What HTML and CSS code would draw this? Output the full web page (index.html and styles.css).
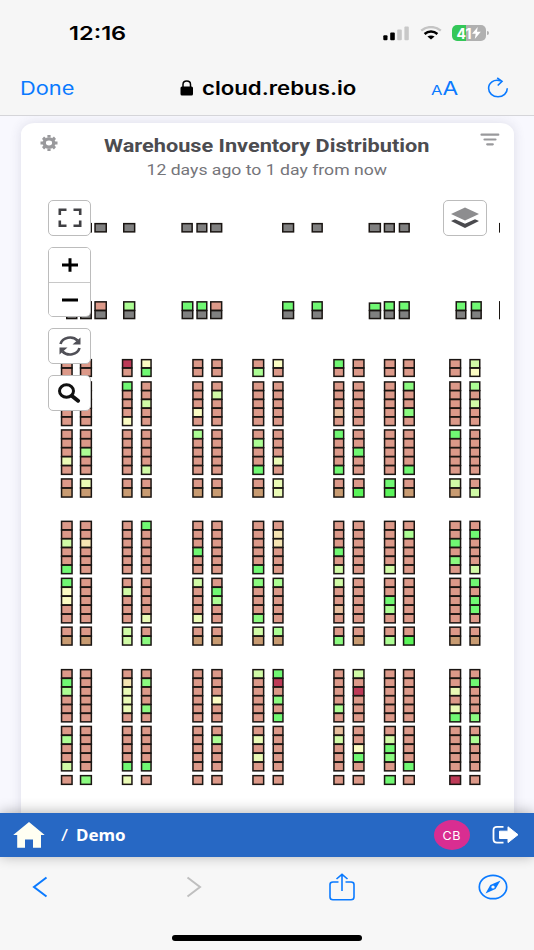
FILE: index.html
```
<!DOCTYPE html>
<html lang="en">
<head>
    <meta charset="UTF-8">
    <meta name="viewport" content="width=device-width, initial-scale=1.0">
    <title>Warehouse Inventory Distribution</title>
    <link rel="stylesheet" href="styles.css">
</head>
<body>
    <header class="browser-top">
        <div class="status-bar">
            <span class="wide time">12:16</span>
            <div class="status-icons">
                <svg width="27" height="15" viewBox="0 0 27 15">
                    <rect x="0.3" y="9.3" width="4.2" height="5" rx="1"/>
                    <rect x="7.2" y="6.6" width="4.6" height="7.7" rx="1"/>
                    <rect x="14.2" y="3.4" width="4.6" height="10.9" rx="1" fill="#c8c8c8"/>
                    <rect x="21.4" y="0.4" width="4.4" height="13.9" rx="1" fill="#c8c8c8"/>
                </svg>
                <svg class="wifi" width="22" height="14" viewBox="0 0 22 14" fill="none">
                    <path d="M1.2 4.7C6.8-.2 15.2-.2 20.8 4.7" stroke="#c4c4c4" stroke-width="2.3"/>
                    <path d="M4.6 8C8.3 4.7 13.7 4.7 17.4 8" stroke="#000" stroke-width="2.5"/>
                    <path d="M11 13.5L7.4 10.6C9.5 9 12.5 9 14.6 10.6Z" fill="#000"/>
                </svg>
                <div class="battery">
                    <span class="battery-text">41</span>
                    <svg width="9" height="12" viewBox="0 0 9 12"><path d="M5.7 0L0 6.8H3.7L2.8 12L8.8 4.8H5Z" fill="#fff"/></svg>
                </div>
            </div>
        </div>
        <div class="address-bar">
            <span class="wide done">Done</span>
            <div class="address">
                <svg width="14" height="16" viewBox="0 0 14 16">
                    <rect x="0.5" y="6.5" width="12.5" height="9" rx="1.5"/>
                    <path d="M3 7.5V4.500C3 -.1 10.500-.1 10.500 4.500V7.500" fill="none" stroke="#000" stroke-width="1.500"/>
                </svg>
                <span class="wide host">cloud.rebus.io</span>
            </div>
            <div class="address-actions">
                <span class="wide text-size"><small>A</small>A</span>
                <svg width="22" height="22" viewBox="0 0 22 22" fill="none" stroke="#0a7aff" stroke-width="1.6">
                    <path d="M13.5 3.8C6.5 1.8 1.6 6 1.6 11.2C1.6 16.1 5.8 19.8 11 19.8C16.2 19.8 20.3 16 20.3 11.3"/>
                    <path d="M10.2 1L15 4.3L10.7 8.5"/>
                </svg>
            </div>
        </div>
    </header>

    <main class="content">
        <section class="card">
            <div class="card-header">
                <svg class="gear" width="18" height="16" viewBox="0 0 18 16">
                    <ellipse cx="9" cy="8" rx="4.8" ry="4.1" fill="none" stroke="#99999c" stroke-width="3.4"/>
                    <path d="M9 0V2.5M9 13.5V16M.5 8H3M15 8H17.5M3 2.8L5 4.5M15 2.8L13 4.5M3 13.2L5 11.5M15 13.2L13 11.5" stroke="#99999c" stroke-width="3.2"/>
                </svg>
                <div class="titles">
                    <h1 class="wide">Warehouse Inventory Distribution</h1>
                    <p class="wide">12 days ago to 1 day from now</p>
                </div>
                <svg class="filter" width="20" height="14" viewBox="0 0 20 14" stroke="#99999c" stroke-width="2.2" stroke-linecap="round">
                    <path d="M1.5 1.7H18.3M4.5 6.5H15.5M7.2 11.3H12.8"/>
                </svg>
            </div>

            <div class="map">
                <svg id="racks" width="452" height="622" viewBox="48 190 452 622"></svg>

                <div class="controls left">
                    <button class="control">
                        <svg width="24" height="20" viewBox="0 0 24 20" fill="none" stroke="#404044" stroke-width="2.6">
                            <path d="M1.8 7V1.7H8.5M15.5 1.7H22.2V7M22.2 12.5V17.8H15.5M8.5 17.8H1.8V12.5"/>
                        </svg>
                    </button>
                    <div class="control-group">
                        <button><svg width="18" height="14" viewBox="0 0 18 14" stroke="#000" stroke-width="3"><path d="M1 7H17M9 .3V13.7"/></svg></button>
                        <button><svg width="18" height="14" viewBox="0 0 18 14" stroke="#000" stroke-width="3"><path d="M1 7H17"/></svg></button>
                    </div>
                    <button class="control refresh">
                        <svg width="24" height="20" viewBox="0 0 24 20">
                            <path d="M2.5 8C4.5 1 14.5-.5 19.5 4.5M21.5 12C19.5 19 9.5 20.5 4.5 15.5" fill="none" stroke="#505057" stroke-width="2.7"/>
                            <path d="M22.5 1.5V8.5H14.5ZM1.5 18.5V11.5H9.5Z" fill="#505057"/>
                        </svg>
                    </button>
                    <button class="control search">
                        <svg width="24" height="20" viewBox="0 0 24 20" fill="none" stroke="#111">
                            <ellipse cx="8.5" cy="8" rx="7" ry="6.2" stroke-width="3"/>
                            <path d="M14 13L20 17.7" stroke-width="4" stroke-linecap="round"/>
                        </svg>
                    </button>
                </div>
                <div class="controls right">
                    <button class="control layers">
                        <svg width="28" height="22" viewBox="0 0 28 22">
                            <path d="M14 .5L28 7L14 13.5L0 7Z" fill="#8d8d8f"/>
                            <path d="M0 14L4 12.2L14 16.8L24 12.2L28 14L14 21Z" fill="#4a4a4e"/>
                        </svg>
                    </button>
                </div>
            </div>
        </section>
    </main>

    <nav class="app-bar">
        <svg width="32" height="26" viewBox="0 0 32 26" fill="#fffff2"><path d="M16 0L31.7 13H28V25.7H20V17.5H12V25.7H4.2V13H.2Z"/></svg>
        <div class="crumbs"><span class="wide slash">/</span><span class="wide crumb">Demo</span></div>
        <div class="avatar"><span class="wide">CB</span></div>
        <svg class="logout" width="27" height="20" viewBox="0 0 27 20">
            <path d="M11.5 1.8H5C2.7 1.8 1.5 3 1.5 5V14C1.5 16.5 2.7 17.7 5 17.7H11.5" fill="none" stroke="#fff" stroke-width="1.8"/>
            <path d="M7.5 6.2H16V1.8L26 9.7L16 17.6V13.5H7.5Z" fill="#fff" stroke="#fff" stroke-linejoin="round"/>
        </svg>
    </nav>

    <footer class="browser-bottom">
        <div class="toolbar">
            <svg width="16" height="22" viewBox="0 0 16 22" fill="none" stroke="#0a7aff" stroke-width="2"><path d="M14.5 1.5L2 11L14.5 20.5"/></svg>
            <svg class="forward" width="16" height="22" viewBox="0 0 16 22" fill="none" stroke="#bfbfbf" stroke-width="2"><path d="M1.5 1.5L14 11L1.5 20.5"/></svg>
            <svg class="share" width="26" height="28" viewBox="0 0 26 28" fill="none" stroke="#0a7aff" stroke-width="1.6">
                <path d="M9.5 9H4C2 9 1 10 1 11.5V24C1 25.7 2 26.7 4 26.7H22C24 26.7 25 25.7 25 24V11.5C25 10 24 9 22 9H16.5M13 18V1.5M7.5 6L13 1.3L18.5 6"/>
            </svg>
            <svg width="30" height="26" viewBox="0 0 30 26">
                <ellipse cx="15" cy="13" rx="13.7" ry="11.7" fill="none" stroke="#0a7aff" stroke-width="1.7"/>
                <path d="M22.5 6.5L17.5 15L7.5 19.5L12.3 11Z" fill="#0a7aff"/>
                <ellipse cx="15" cy="13" rx="1.7" ry="1.5" fill="#f7f7f7"/>
            </svg>
        </div>
        <div class="home-indicator"></div>
    </footer>

    <script src="racks.js"></script>
</body>
</html>
```
FILE: styles.css
```
* {
    box-sizing: border-box;
}

body {
    display: flex;
    flex-direction: column;
    width: 534px;
    height: 950px;
    margin: 0;
    overflow: hidden;
    background: #f8f8fe;
    font-family: Inter, "Liberation Sans", sans-serif;
}

svg {
    display: block;
    flex: none;
}

button {
    display: flex;
    justify-content: center;
    align-items: center;
    padding: 0;
    border: 0;
    background: #fff;
}

.wide {
    display: inline-block;
    white-space: nowrap;
    transform: scaleX(1.18);
    transform-origin: left center;
}

/* Browser chrome */
.browser-top {
    flex: none;
    height: 116px;
    background: #f6f6f6;
    border-bottom: 1px solid #d5d5d9;
}

.status-bar {
    display: flex;
    justify-content: space-between;
    align-items: center;
    height: 60px;
    padding: 6px 45px 0 69px;
}

.time {
    font-size: 19px;
    font-weight: 600;
    transform: scaleX(1.24);
}

.status-icons {
    display: flex;
    align-items: center;
}

.wifi {
    margin: 0 10px;
}

.battery {
    display: flex;
    align-items: center;
    justify-content: center;
    gap: 1px;
    position: relative;
    width: 34px;
    height: 16px;
    margin-right: 3px;
    border-radius: 5px;
    background: linear-gradient(to right, #34c759 41%, #b0b0b0 41%);
    color: #fff;
    font-size: 14px;
    font-weight: 700;
}

.battery::after {
    content: "";
    position: absolute;
    right: -3px;
    top: 6px;
    width: 2px;
    height: 4px;
    border-radius: 0 2px 2px 0;
    background: #b0b0b0;
}

.address-bar {
    display: flex;
    align-items: center;
    height: 55px;
    padding: 0 25px 0 20px;
    font-size: 18.5px;
}

.done,
.text-size {
    color: #0a7aff;
}

.done {
    width: 160px;
}

.address {
    display: flex;
    flex: 1;
    align-items: center;
    gap: 8px;
}

.host {
    font-weight: 600;
    transform: scaleX(1.2);
}

.address-actions {
    display: flex;
    align-items: center;
    justify-content: space-between;
    width: 78px;
}

.text-size {
    transform: scaleX(1.23);
}

.text-size small {
    font-size: 13.5px;
}

/* Card */
.content {
    flex: 1;
    min-height: 0;
    padding: 7px 20.5px 0;
    overflow: hidden;
}

.card {
    height: 710px;
    border-radius: 14px 14px 0 0 / 11px 11px 0 0;
    background: #fff;
    box-shadow: 0 0 12px rgba(60, 60, 100, 0.14);
}

.card-header {
    display: flex;
    align-items: flex-start;
    height: 67px;
    padding: 0 14px 0 19.5px;
    font-family: Roboto, sans-serif;
    text-align: center;
}

.gear {
    margin-top: 12px;
}

.filter {
    margin-top: 10px;
}

.titles {
    flex: 1;
    margin-right: 4px;
}

.titles .wide {
    display: block;
    transform-origin: center;
}

.titles h1 {
    margin: 11px 0 0;
    color: #4c4c50;
    font-size: 18px;
    line-height: 24px;
    transform: scaleX(1.205);
}

.titles p {
    margin: 0;
    color: #75757a;
    font-size: 15.5px;
    line-height: 24px;
    transform: scaleX(1.137);
}

.map {
    position: relative;
    width: 452px;
    height: 622px;
    margin-left: 27.5px;
}

.controls {
    position: absolute;
    top: 10px;
    display: flex;
    flex-direction: column;
    width: 43px;
}

.left {
    left: 0;
}

.right {
    right: 13.5px;
    width: 44px;
}

.control,
.control-group {
    width: 100%;
    border: 1.5px solid #bcbcbc;
    border-radius: 5px;
    overflow: hidden;
}

.control {
    height: 36px;
}

.control-group {
    height: 70px;
    margin: 11px 0;
}

.control-group button {
    width: 100%;
    height: 34px;
}

.control-group button + button {
    border-top: 1px solid #c8c8c8;
}

.search {
    margin-top: 11px;
}

/* Blue app bar */
.app-bar {
    display: flex;
    align-items: center;
    flex: none;
    position: relative;
    height: 44px;
    padding: 0 15px 0 13px;
    background: #2768c4;
    box-shadow: 0 -1px 14px rgba(0, 0, 0, 0.3);
    color: #fff;
}

.crumbs {
    display: flex;
    flex: 1;
    margin-left: 16px;
    font-family: "Noto Sans", sans-serif;
    font-size: 16px;
}

.slash {
    width: 15px;
}

.crumb {
    font-weight: 700;
    transform: scaleX(1.06);
}

.avatar {
    display: flex;
    justify-content: center;
    align-items: center;
    width: 36px;
    height: 30px;
    margin-right: 22px;
    border-radius: 50%;
    background: #d92d91;
    font-size: 12px;
}

.avatar .wide {
    letter-spacing: 0.5px;
    transform: scaleX(1.05);
    transform-origin: center;
}

.browser-bottom {
    display: flex;
    flex-direction: column;
    align-items: center;
    flex: none;
    height: 93px;
    background: #f7f7f7;
}

.toolbar {
    display: flex;
    align-items: center;
    width: 100%;
    height: 60px;
    padding: 0 26px 0 32px;
}

.forward {
    margin-left: 138px;
}

.share {
    margin-left: 127px;
    margin-right: auto;
}

.home-indicator {
    width: 190px;
    height: 6px;
    margin-top: 18px;
    border-radius: 3px;
    background: #000;
}
```
FILE: racks.js
```
const svg = document.getElementById('racks');

const colors = {
    r: '#dc9989', t: '#c89b72', g: '#70f873', G: '#5af45a', l: '#8bfa80',
    m: '#acfd94', p: '#d0faa6', y: '#eafab6', Y: '#fbfcc3', o: '#f5e4b2',
    k: '#e6bd9d', c: '#bd3a57', x: '#808080'
};

// [x, width] of every rack column
const columns = [
    [60.8, 12], [79.8, 12.3], [121.8, 10.9], [140.8, 11], [192.2, 11.2], [211.2, 11.5], [252.2, 12.2],
    [272.5, 11.2], [333.2, 11.2], [352.5, 12.2], [383.8, 12.2], [402.8, 12.2], [449.1, 12.2], [469.3, 11.2]
];

// Shelves top to bottom, one string per column, groups separated by a space
const blocks = [
    {
        groups: [[359, 377], [381.3, 426.2], [429.3, 475], [478.3, 497.7]],
        racks: [
            'rr rrrrr rrryr rt', 'rr rrrrr rrmrr yt', 'cr grrrY rrrrr rt', 'Yg rrprr rrrrp rt',
            'rr rrrYr mrrrr rt', 'rr rprrr rrrrr rt', 'rm rrrrr rmrrg rt', 'Yr rrrrr rrryr yy',
            'gr rrrkr grrrg rt', 'rr rrrrr rrgrr rG', 'rr rrrrr rrrrr gG', 'rr lrrlr rrrrg rt',
            'rr rrrrr grrrr pt', 'pY mrprr rrrrr rp'
        ]
    },
    {
        groups: [[520.7, 574.3], [577.7, 623.5], [626.5, 645.7]],
        racks: [
            'rrprrg gYYrr rt', 'rrorrr rrrrr rt', 'rrrrrr rprrr pp', 'grrrrr rrrry rl',
            'rrrgrr prrry rt', 'rrrrrr rgmrr rt', 'rrrrrg lrrrl pt', 'roorrr mrrrr mt',
            'rrrgrp prrkr rl', 'rrrrrr rrrrr rt', 'rrrrrp rrgmr rm', 'rmrrrr rrrrr rG',
            'rrgrlr rrrrr rt', 'rgrrrp grggr rt'
        ]
    },
    {
        groups: [[669, 722.5], [725.8, 771.5], [775, 785]],
        racks: [
            'rgmrrr rmrrp r', 'rrrrrr rrrrr l', 'royyyr rrrrg y', 'rlrrlr rrrrg r',
            'rrrrrr rrrrr r', 'rrrYrr rmrrr r', 'prrrrr ryryr r', 'gcrlrg rrrrr r',
            'rrrrmr kprrr r', 'prcrrr rrYgr r', 'rrrrrr rpglr g', 'rrrrrr rrrrg r',
            'rryryg rrrrr c', 'rgrrrl rmrrr r'
        ]
    }
];

function cell(x, y, w, h, key) {
    const rect = document.createElementNS('http://www.w3.org/2000/svg', 'rect');
    const attrs = { x: x + 0.75, y: y + 0.65, width: w - 1.5, height: h - 1.3, fill: colors[key], stroke: '#1a1512', 'stroke-width': 1.5 };
    for (const name in attrs) {
        rect.setAttribute(name, attrs[name]);
    }
    svg.appendChild(rect);
}

blocks.forEach(block => {
    block.racks.forEach((rack, i) => {
        const [x, w] = columns[i];
        rack.split(' ').forEach((shelves, g) => {
            const [top, bottom] = block.groups[g];
            const step = (bottom - top - 1) / shelves.length;
            [...shelves].forEach((key, n) => cell(x, top + n * step, w, step + 1, key));
        });
    });
});

// Dock doors
const docks = [[80, 12], [94.3, 12.7], [123, 12.4], [181.3, 11.6], [196.3, 11.2], [210, 12.4], [282, 12.3],
    [311.5, 11.4], [368.5, 12.6], [383.7, 11.3], [398.7, 11.2], [499, 12]];
docks.forEach(([x, w]) => cell(x, 223, w, 9.5, 'x'));

// Staging lanes: [x, width, key of the upper cell]
const lanes = [[66, 11.5, 'r'], [80, 12, 'r'], [94.3, 12.7, 'r'], [123, 12.4, 'm'], [181.5, 12, 'g'], [196.3, 11.2, 'g'],
    [210, 12.4, 'r'], [282, 12.3, 'g'], [311.5, 11.4, 'g'], [368.7, 12.5, 'g'], [383.7, 11.3, 'g'], [398.7, 11.2, 'g'],
    [455.5, 11, 'g'], [470.7, 11.2, 'g'], [499, 12, 'x']];
lanes.forEach(([x, w, key]) => {
    const y = x === 368.7 ? 302.5 : 301.2;
    cell(x, y, w, 311 - y, key);
    cell(x, 310, w, 9.2, 'x');
});
```
